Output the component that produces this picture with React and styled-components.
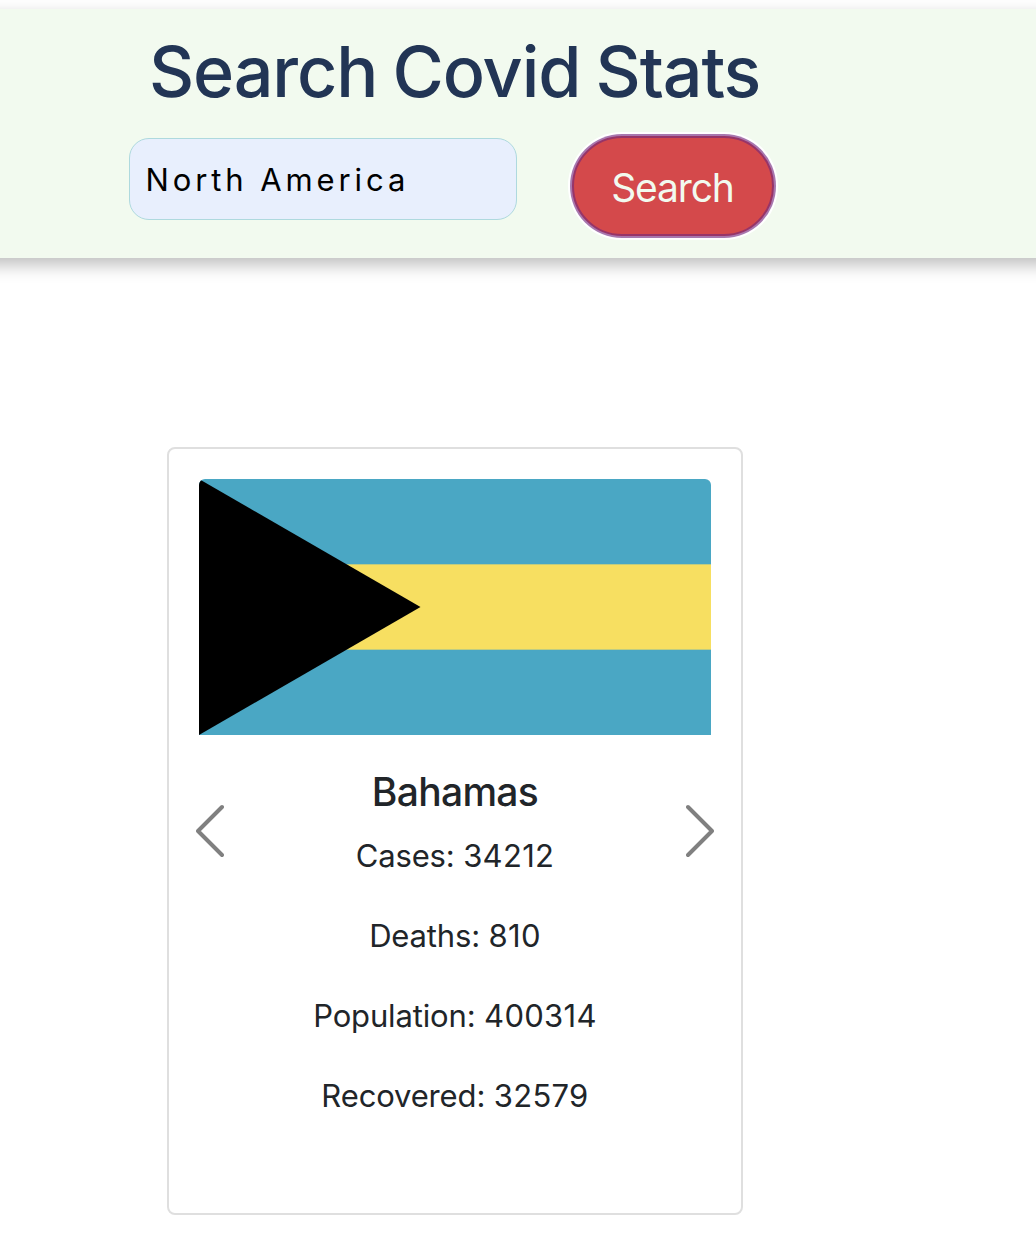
import React, { useState } from "react";
import styled, { createGlobalStyle } from "styled-components";

const GlobalStyle = createGlobalStyle`
  *, *::before, *::after { box-sizing: border-box; }
  body {
    margin: 0;
    background: #fff;
    color: #212529;
    font-family: Inter, "Liberation Sans", sans-serif;
  }
`;

const Page = styled.div`
  height: 1256px;
  padding-top: 9px;
  overflow: hidden;
`;

const Header = styled.header`
  height: 249px;
  margin: 0 -24px;
  padding: 0 24px;
  background: #f2faef;
  box-shadow: 0 7px 16px rgba(0, 0, 0, 0.26);
`;

const Column = styled.div`
  width: 910px;
  display: flex;
  flex-direction: column;
  align-items: center;
`;

const Title = styled.h1`
  margin: 20px 1px 0 0;
  height: 86px;
  color: #223555;
  font-size: 70px;
  font-weight: 500;
  line-height: 86px;
  letter-spacing: -1.1px;
  word-spacing: -2.4px;
  white-space: nowrap;
`;

const SearchForm = styled.form`
  width: 645px;
  margin: 21px 8px 0 0;
  display: flex;
  justify-content: space-between;
  align-items: flex-start;
`;

const SearchInput = styled.input`
  width: 388px;
  height: 82px;
  margin-top: 2px;
  padding: 0 17px 0 16px;
  border: 1px solid #aed9de;
  border-radius: 20px;
  outline: none;
  background: #e8effd;
  color: #000;
  font: 400 31px Inter, "Liberation Sans", sans-serif;
  letter-spacing: 3.9px;
`;

const SearchButton = styled.button`
  width: 202px;
  height: 100px;
  padding: 2px 0 0;
  border: 2px solid #973468;
  border-radius: 50px;
  box-shadow: 0 0 0 2px #a877ae, 0 0 0 4px #fff;
  background: #d4494b;
  color: #f2faef;
  font: 400 39px Inter, "Liberation Sans", sans-serif;
  letter-spacing: -1.15px;
`;

const Card = styled.article`
  width: 576px;
  height: 768px;
  margin-top: 189px;
  padding: 30px;
  border: 2px solid #dfdfdf;
  border-radius: 8px;
  background: #fff;
`;

const Flag = styled.svg`
  display: block;
  width: 512px;
  height: 256px;
  border-radius: 6px 6px 0 0;
`;

const CardBody = styled.div`
  display: flex;
  justify-content: space-between;
  margin: 0 -3px;
`;

const Arrow = styled.button`
  width: 28px;
  height: 54px;
  margin-top: 69px;
  padding: 0;
  border: 0;
  background: none;
  display: flex;
`;

const Stats = styled.div`
  padding-top: 33px;
  text-align: center;
`;

const Country = styled.h2`
  margin: 0;
  font-size: 39px;
  font-weight: 500;
  line-height: 48px;
  letter-spacing: -0.7px;
`;

const Stat = styled.p`
  margin: ${(p) => (p.$first ? "16px" : "32px")} 0 0;
  font-size: 31px;
  line-height: 48px;
  letter-spacing: -0.15px;
`;

const Value = styled.span`
  letter-spacing: 0.3px;
`;

const stats = [
  { label: "Cases", value: 34212 },
  { label: "Deaths", value: 810 },
  { label: "Population", value: 400314 },
  { label: "Recovered", value: 32579 },
];

function Chevron({ points }) {
  return (
    <svg width="28" height="54" viewBox="0 0 28 54" fill="none">
      <polyline points={points} stroke="#808080" strokeWidth="4" strokeLinecap="round" strokeLinejoin="round" />
    </svg>
  );
}

function BahamasFlag() {
  return (
    <Flag viewBox="0 0 512 256" role="img" aria-label="Bahamas flag">
      <rect width="512" height="256" fill="#4aa7c4" />
      <rect y="85.33" width="512" height="85.33" fill="#f7df61" />
      <path d="M0 0L221.5 128L0 256Z" fill="#000" />
    </Flag>
  );
}

export default function App() {
  const [query, setQuery] = useState("North America");
  return (
    <Page>
      <GlobalStyle />
      <Header>
        <Column>
          <Title>Search Covid Stats</Title>
          <SearchForm onSubmit={(e) => e.preventDefault()}>
            <SearchInput value={query} onChange={(e) => setQuery(e.target.value)} />
            <SearchButton type="submit">Search</SearchButton>
          </SearchForm>
        </Column>
      </Header>
      <Column>
        <Card>
          <BahamasFlag />
          <CardBody>
            <Arrow aria-label="Previous">
              <Chevron points="26,3 2,27 26,51" />
            </Arrow>
            <Stats>
              <Country>Bahamas</Country>
              {stats.map((s, i) => (
                <Stat key={s.label} $first={i === 0}>
                  {s.label}: <Value>{s.value}</Value>
                </Stat>
              ))}
            </Stats>
            <Arrow aria-label="Next">
              <Chevron points="2,3 26,27 2,51" />
            </Arrow>
          </CardBody>
        </Card>
      </Column>
    </Page>
  );
}
